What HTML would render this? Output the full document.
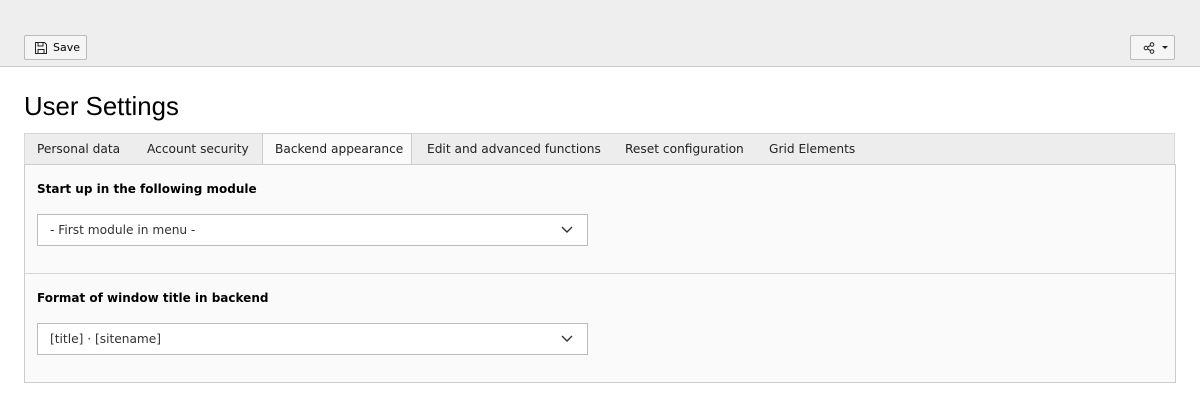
<!DOCTYPE html><html><head><style>
body{margin:0;width:1200px;height:406px;background:#fff;font-family:"DejaVu Sans","Liberation Sans",sans-serif;color:#000;position:relative;overflow:hidden}
.top{position:absolute;left:0;top:0;width:1200px;height:66px;background:#eee;border-bottom:1px solid #c8c8c8}
.btn{position:absolute;top:35px;height:25px;border:1px solid #bbb;background:#f5f5f5;border-radius:2px;box-sizing:border-box;font-size:11px;display:flex;align-items:center}
h1{position:absolute;left:24px;top:93px;margin:0;font-family:"Liberation Sans",sans-serif;font-weight:normal;font-size:25.8px;letter-spacing:0}
.tabs{position:absolute;left:24px;top:133px;width:1151px;height:31px;background:#ededed;border:1px solid #d7d7d7;border-bottom:none;box-sizing:border-box;font-size:12.2px}
.tab{position:absolute;top:8px;color:#222}
.act{position:absolute;left:237px;top:-1px;width:150px;height:33px;background:#fafafa;border:1px solid #ccc;border-bottom:none;box-sizing:border-box}
.panel{position:absolute;left:24px;top:164px;width:1152px;height:219px;background:#fafafa;border:1px solid #ccc;box-sizing:border-box}
.lbl{position:absolute;left:12px;font-weight:bold;font-size:12px}
.sel{position:absolute;left:12px;width:551px;height:32px;background:#fff;border:1px solid #bbb;box-sizing:border-box;font-size:12.2px;padding:8px 0 0 12px;color:#333}
.sel svg{position:absolute;right:14px;top:11px}
</style></head><body>
<div class="top"></div>
<div class="btn" style="left:24px;width:63px"><svg width="14" height="14" viewBox="0 0 14 14" style="margin:0 5px 0 9px"><path d="M1.5 1.5h9l2 2v9h-11z M4 1.5v3.5h5v-3.5 M4 12.5v-4h6v4" fill="none" stroke="#222" stroke-width="1"/></svg>Save</div>
<div class="btn" style="left:1130px;width:45px"><svg width="12" height="12" viewBox="0 0 12 12" style="margin-left:12px"><circle cx="3" cy="6" r="1.8" fill="none" stroke="#222"/><circle cx="9" cy="2.5" r="1.8" fill="none" stroke="#222"/><circle cx="9" cy="9.5" r="1.8" fill="none" stroke="#222"/><path d="M4.5 5.2L7.5 3.3M4.5 6.8L7.5 8.7" stroke="#222"/></svg><svg width="6" height="4" style="margin-left:7px"><path d="M0 0h6l-3 3z" fill="#222"/></svg></div>
<h1>User Settings</h1>
<div class="tabs"><div class="act"></div>
<span class="tab" style="left:12px">Personal data</span>
<span class="tab" style="left:122px">Account security</span>
<span class="tab" style="left:250px">Backend appearance</span>
<span class="tab" style="left:402px">Edit and advanced functions</span>
<span class="tab" style="left:600px">Reset configuration</span>
<span class="tab" style="left:744px">Grid Elements</span></div>
<div class="panel">
<div class="lbl" style="top:17px">Start up in the following module</div>
<div class="sel" style="top:49px">- First module in menu -<svg width="12" height="8"><path d="M1 1l5 5 5-5" fill="none" stroke="#333" stroke-width="1.4"/></svg></div>
<div style="position:absolute;left:0;top:108px;width:100%;border-top:1px solid #d5d5d5"></div>
<div class="lbl" style="top:126px">Format of window title in backend</div>
<div class="sel" style="top:158px">[title] · [sitename]<svg width="12" height="8"><path d="M1 1l5 5 5-5" fill="none" stroke="#333" stroke-width="1.4"/></svg></div>
</div>
</body></html>
